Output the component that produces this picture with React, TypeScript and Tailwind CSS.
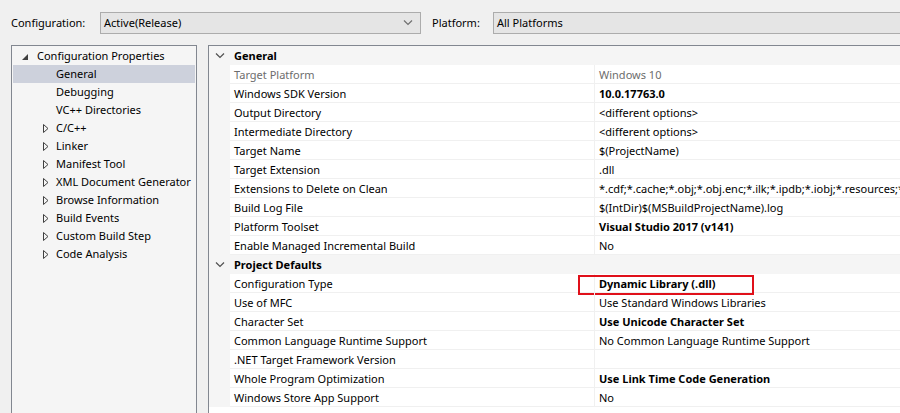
import React from 'react';

type Row =
  | { kind: 'header'; label: string }
  | { kind: 'prop'; label: string; value: string; bold?: boolean; dim?: boolean; mark?: boolean };

const ROWS: Row[] = [
  { kind: 'header', label: 'General' },
  { kind: 'prop', label: 'Target Platform', value: 'Windows 10', dim: true },
  { kind: 'prop', label: 'Windows SDK Version', value: '10.0.17763.0', bold: true },
  { kind: 'prop', label: 'Output Directory', value: '<different options>' },
  { kind: 'prop', label: 'Intermediate Directory', value: '<different options>' },
  { kind: 'prop', label: 'Target Name', value: '$(ProjectName)' },
  { kind: 'prop', label: 'Target Extension', value: '.dll' },
  {
    kind: 'prop',
    label: 'Extensions to Delete on Clean',
    value: '*.cdf;*.cache;*.obj;*.obj.enc;*.ilk;*.ipdb;*.iobj;*.resources;*.tlb;*.tli;*.tlh;*.tmp',
  },
  { kind: 'prop', label: 'Build Log File', value: '$(IntDir)$(MSBuildProjectName).log' },
  { kind: 'prop', label: 'Platform Toolset', value: 'Visual Studio 2017 (v141)', bold: true },
  { kind: 'prop', label: 'Enable Managed Incremental Build', value: 'No' },
  { kind: 'header', label: 'Project Defaults' },
  { kind: 'prop', label: 'Configuration Type', value: 'Dynamic Library (.dll)', bold: true, mark: true },
  { kind: 'prop', label: 'Use of MFC', value: 'Use Standard Windows Libraries' },
  { kind: 'prop', label: 'Character Set', value: 'Use Unicode Character Set', bold: true },
  { kind: 'prop', label: 'Common Language Runtime Support', value: 'No Common Language Runtime Support' },
  { kind: 'prop', label: '.NET Target Framework Version', value: '' },
  { kind: 'prop', label: 'Whole Program Optimization', value: 'Use Link Time Code Generation', bold: true },
  { kind: 'prop', label: 'Windows Store App Support', value: 'No' },
];

const TREE = [
  { label: 'General', expandable: false, selected: true },
  { label: 'Debugging', expandable: false },
  { label: 'VC++ Directories', expandable: false },
  { label: 'C/C++', expandable: true },
  { label: 'Linker', expandable: true },
  { label: 'Manifest Tool', expandable: true },
  { label: 'XML Document Generator', expandable: true },
  { label: 'Browse Information', expandable: true },
  { label: 'Build Events', expandable: true },
  { label: 'Custom Build Step', expandable: true },
  { label: 'Code Analysis', expandable: true },
];

function Chevron({ className = '' }: { className?: string }) {
  return (
    <svg width="10" height="6" viewBox="0 0 10 6" className={className}>
      <path d="M1 0.5 L5 4.5 L9 0.5" fill="none" stroke="currentColor" strokeWidth="1.2" />
    </svg>
  );
}

function Collapsed() {
  return (
    <svg width="6" height="9" viewBox="0 0 6 9">
      <path d="M0.5 0.5 L5 4.5 L0.5 8.5 Z" fill="none" stroke="#404040" strokeWidth="1" />
    </svg>
  );
}

function Expanded() {
  return (
    <svg width="6" height="6" viewBox="0 0 6 6">
      <path d="M6 0 L6 6 L0 6 Z" fill="#404040" />
    </svg>
  );
}

function Dropdown({ text, arrow }: { text: string; arrow?: boolean }) {
  return (
    <div className="h-[22px] bg-[#e5e5e5] border border-[#acacac] flex items-center pl-[3px] pr-[7px]">
      <span className="flex-1">{text}</span>
      {arrow && <Chevron className="text-[#707070]" />}
    </div>
  );
}

export default function App() {
  return (
    <div
      className="w-[900px] h-[413px] bg-[#f0f0f0] overflow-hidden text-[11px] text-black flex flex-col"
      style={{ fontFamily: '"Noto Sans", "Segoe UI", sans-serif' }}
    >
      {/* TOP BAR */}
      <div className="h-[45px] shrink-0 flex items-start pt-[12px] pl-[11px]">
        <div className="w-[89px] leading-[22px]">Configuration:</div>
        <div className="w-[321px]">
          <Dropdown text="Active(Release)" arrow />
        </div>
        <div className="w-[72px] pl-[11px] leading-[22px]">Platform:</div>
        <div className="flex-1 -mr-[20px]">
          <Dropdown text="All Platforms" />
        </div>
      </div>

      <div className="flex-1 flex pl-[11px] min-h-0">
        {/* TREE */}
        <div className="w-[186px] shrink-0 border-l border-t border-r border-[#828790] bg-[#f5f5f5] pt-[1px]">
          <div className="h-[18px] flex items-center pt-px">
            <span className="w-[25px] shrink-0 pl-[10px] flex items-center"><Expanded /></span>
            <span>Configuration Properties</span>
          </div>
          {TREE.map((t) => (
            <div
              key={t.label}
              className={`h-[18px] mx-px flex items-center pt-px whitespace-nowrap ${t.selected ? 'bg-[#cdd1dc]' : ''}`}
            >
              <span className="w-[43px] shrink-0 pl-[30px] flex items-center">{t.expandable && <Collapsed />}</span>
              <span>{t.label}</span>
            </div>
          ))}
        </div>

        {/* PROPERTY GRID */}
        <div className="flex-1 ml-[11px] border-l border-t border-[#828790] bg-white min-w-0">
          {ROWS.map((r, i) =>
            r.kind === 'header' ? (
              <div key={i} className="h-[19px] bg-[#f5f5f5] flex items-center pt-px">
                <span className="w-[25px] shrink-0 pl-[6px] flex items-center">
                  <Chevron className="text-[#505050]" />
                </span>
                <span className="font-bold">{r.label}</span>
              </div>
            ) : (
              <div key={i} className="h-[19px] flex">
                <div className="w-[21px] shrink-0 bg-[#f5f5f5]" />
                <div className="w-[364px] shrink-0 pl-[4px] border-b border-[#f0f0f0] whitespace-nowrap leading-[19px]">
                  <span className={r.dim ? 'text-[#6d6d6d]' : ''}>{r.label}</span>
                </div>
                <div className="relative flex-1 min-w-0 pl-[4px] border-l border-b border-[#f0f0f0] whitespace-nowrap leading-[19px]">
                  <span className={`${r.dim ? 'text-[#6d6d6d]' : ''} ${r.bold ? 'font-bold' : ''}`}>{r.value}</span>
                  {r.mark && (
                    <div className="absolute left-[-17px] top-px w-[176px] h-[20px] border-2 border-[#e0101a]" />
                  )}
                </div>
              </div>
            )
          )}
        </div>
      </div>
    </div>
  );
}
